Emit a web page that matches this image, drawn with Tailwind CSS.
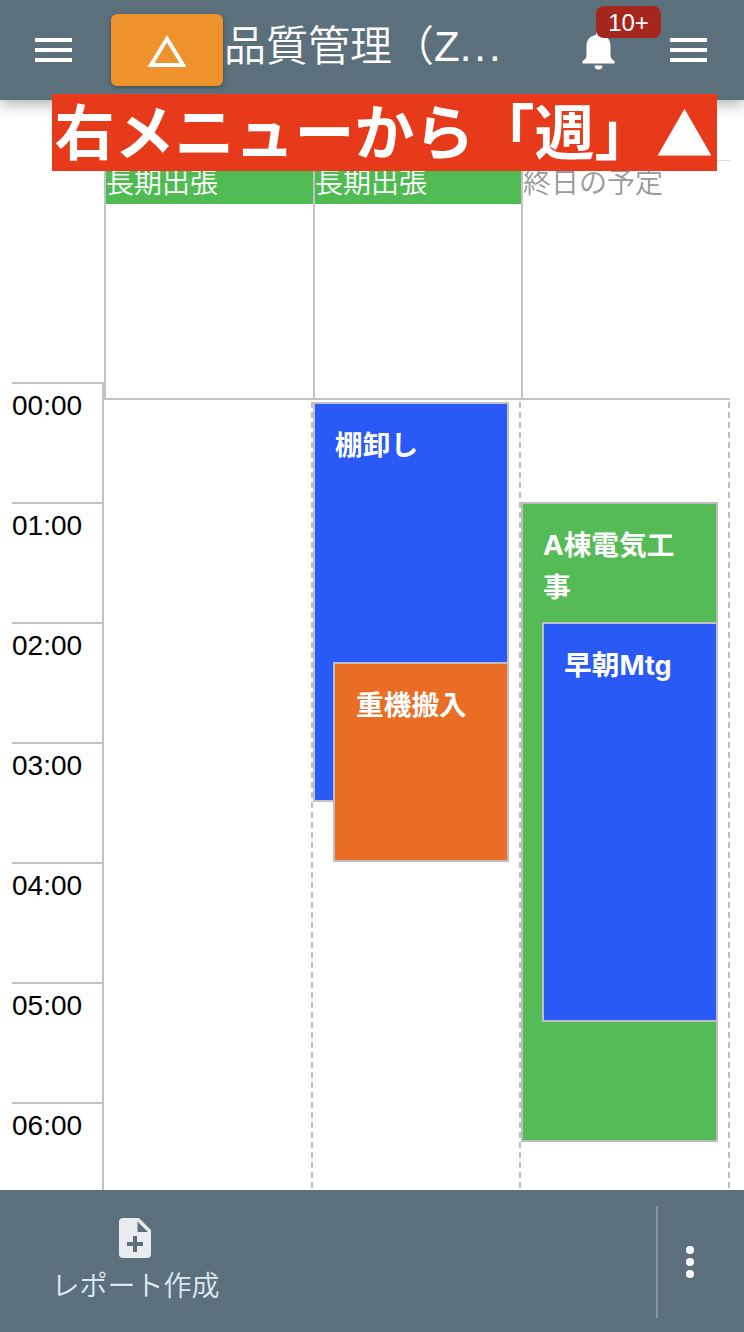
<!DOCTYPE html>
<html lang="ja">
<head>
<meta charset="utf-8">
<title>品質管理</title>
<script src="https://cdn.jsdelivr.net/npm/@tailwindcss/browser@4"></script>
</head>
<body class="relative flex h-[1332px] w-[744px] flex-col overflow-hidden bg-white font-['Liberation_Sans','Noto_Sans_CJK_JP',sans-serif] text-[28px]">
  <header class="relative z-10 flex h-[100px] shrink-0 items-center bg-[#5c707c] pr-[37px] pl-[35px] text-white shadow-[0_2px_16px_rgba(0,0,0,0.4)]">
    <div class="flex w-[37px] flex-col gap-1.5">
      <span class="h-1 bg-white"></span><span class="h-1 bg-white"></span><span class="h-1 bg-white"></span>
    </div>
    <div class="ml-[39px] flex h-[72px] w-28 items-center justify-center rounded-md bg-[#ee932c] shadow-[0_1px_4px_rgba(0,0,0,0.35)]">
      <svg class="mt-0.5 h-8 w-10" viewBox="0 0 40 32"><path fill="#fff" fill-rule="evenodd" d="M20 0 39.500 32H.5ZM20 7.600 7.500 28h25Z"/></svg>
    </div>
    <h1 class="ml-px w-[345px] -translate-y-[3px] text-[42px] leading-[60px] font-[350] whitespace-nowrap">品質管理（Z<span class="tracking-[3px]">...</span></h1>
    <div class="relative ml-[13px] h-10 w-[33px] translate-y-px">
      <svg class="h-10 w-[33px]" viewBox="0 0 33 40"><path fill="#fff" d="M16.500 0a2.500 2.500 0 0 1 2.500 2.500v1.300c6 1.400 9.500 5 9.500 11.200v8.500c0 3.500 1.200 5 4 6.500v2.500H.5V30c2.800-1.500 4-3 4-6.500V15c0-6.200 3.500-9.800 9.500-11.200V2.500A2.500 2.500 0 0 1 16.500 0ZM12.500 34.500h8a4 4 0 0 1-8 0Z"/></svg>
      <span class="absolute -top-[25px] left-[14px] flex h-8 w-[65px] items-center justify-center rounded-lg bg-[#a5261d] text-2xl"><span class="translate-y-px">10+</span></span>
    </div>
    <div class="ml-auto flex w-[37px] flex-col gap-1.5">
      <span class="h-1 bg-white"></span><span class="h-1 bg-white"></span><span class="h-1 bg-white"></span>
    </div>
  </header>

  <div class="absolute top-[94px] left-[52px] z-20 flex h-[77px] w-[665px] items-center justify-center bg-[#e63a1b] pb-[7px] font-['Noto_Sans_CJK_JP',sans-serif] text-[60px] leading-none font-bold whitespace-nowrap text-white">右メニューから「週」<span class="w-[60px] translate-y-0.5 text-center text-[57px]">▲</span></div>

  <main class="flex h-[1090px] shrink-0 overflow-hidden">
    <div class="w-[104px] shrink-0 pt-[282px] pl-3 leading-[44px] text-black">
      <div class="h-[120px] border-t-2 border-r-2 border-[#c2c2c4]">00:00</div>
      <div class="h-[120px] border-t-2 border-r-2 border-[#c2c2c4]">01:00</div>
      <div class="h-[120px] border-t-2 border-r-2 border-[#c2c2c4]">02:00</div>
      <div class="h-[120px] border-t-2 border-r-2 border-[#c2c2c4]">03:00</div>
      <div class="h-[120px] border-t-2 border-r-2 border-[#c2c2c4]">04:00</div>
      <div class="h-[120px] border-t-2 border-r-2 border-[#c2c2c4]">05:00</div>
      <div class="h-[120px] border-t-2 border-r-2 border-[#c2c2c4]">06:00</div>
    </div>
    <div class="flex w-[626px] shrink-0 flex-col pt-[60px]">
      <div class="grid h-[240px] shrink-0 grid-cols-[209px_208px_209px] border-t border-b-2 border-t-[#dddddd] border-b-[#c2c2c4] leading-[45px] font-[350]">
        <div class="border-l-2 border-[#c2c2c4]"><div class="h-[43px] bg-[#50bb53] text-white">長期出張</div></div>
        <div class="border-l-2 border-[#c2c2c4]"><div class="h-[43px] bg-[#50bb53] text-white">長期出張</div></div>
        <div class="border-l-2 border-[#c2c2c4]"><div class="h-[43px] text-[#999999]">終日の予定</div></div>
      </div>
      <div class="mt-0.5 grid h-[788px] shrink-0 grid-cols-[209px_208px_209px] font-['Inter','Noto_Sans_CJK_JP',sans-serif] text-[27.700px] leading-[42px] font-bold text-white">
        <div class="flex justify-end"><span class="w-0.5 bg-[repeating-linear-gradient(to_bottom,#c0bebe_0px,#c0bebe_6px,transparent_6px,transparent_10px)]"></span></div>
        <div class="relative flex justify-end">
          <span class="w-0.5 bg-[repeating-linear-gradient(to_bottom,#c0bebe_0px,#c0bebe_6px,transparent_6px,transparent_10px)]"></span>
          <div class="absolute top-0 left-0 h-[400px] w-[196px] border-2 border-[#c0c0c4] bg-[#295af5] p-5">棚卸し</div>
          <div class="absolute top-[260px] left-5 h-[200px] w-[176px] border-2 border-[#c0c0c4] bg-[#e96d25] p-5 pl-[21px]">重機搬入</div>
        </div>
        <div class="relative flex justify-end">
          <span class="w-0.5 bg-[repeating-linear-gradient(to_bottom,#c0bebe_0px,#c0bebe_6px,transparent_6px,transparent_10px)]"></span>
          <div class="absolute top-[100px] left-0 h-[640px] w-[197px] border-2 border-[#bcbcbc] bg-[#55bb56] p-5">A棟電気工事</div>
          <div class="absolute top-[220px] left-[21px] h-[400px] w-[176px] border-2 border-[#c0c0c4] bg-[#295af5] p-5">早朝<span class="text-[27px]">Mtg</span></div>
        </div>
      </div>
    </div>
  </main>

  <footer class="flex h-[142px] shrink-0 items-center bg-[#5c707c] pt-0.5">
    <div class="flex w-[271px] flex-col items-center text-[#dce9f3]">
      <svg class="h-10 w-8 -translate-x-px" viewBox="0 0 32 40"><path fill="#e8ecf1" fill-rule="evenodd" d="M4 0h16l12 12v24a4 4 0 0 1-4 4H4a4 4 0 0 1-4-4V4a4 4 0 0 1 4-4ZM18.500 3.500V14H29ZM14 18v6H8v4h6v6h4v-6h6v-4h-6v-6Z"/></svg>
      <span class="mt-2 -mb-px leading-[42px] font-[350]">レポート作成</span>
    </div>
    <div class="ml-auto flex h-28 w-[88px] flex-col items-center justify-center gap-1 border-l-2 border-[#8496a2] pr-[22px]">
      <span class="size-2 rounded-full bg-white"></span><span class="size-2 rounded-full bg-white"></span><span class="size-2 rounded-full bg-white"></span>
    </div>
  </footer>
</body>
</html>
